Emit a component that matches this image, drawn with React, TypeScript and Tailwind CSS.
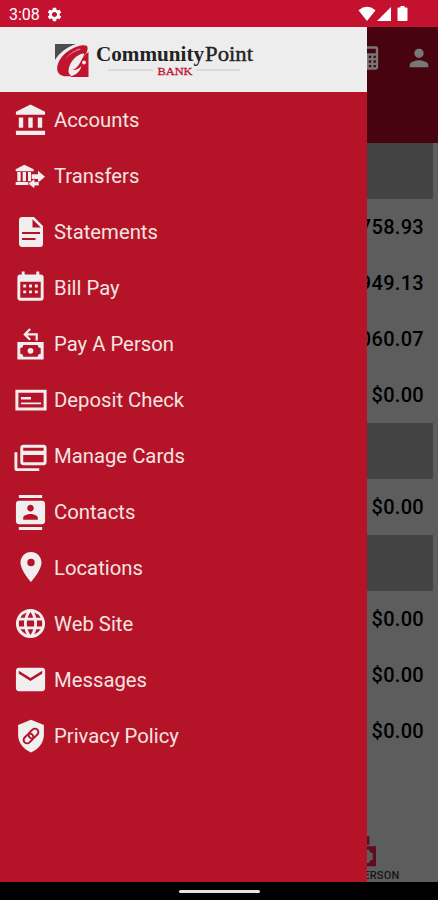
import type { ReactNode } from "react";
import {
  MdAccountBalance,
  MdContacts,
  MdEmail,
  MdLanguage,
  MdLocationOn,
  MdPerson,
  MdSettings,
} from "react-icons/md";

function Icon({ d, className = "size-9" }: { d: string; className?: string }) {
  return (
    <svg viewBox="0 0 24 24" fill="currentColor" className={className}>
      <path fillRule="evenodd" d={d} />
    </svg>
  );
}

const paths = {
  document:
    "M13,9H18.5L13,3.5V9M6,2H14L20,8V20A2,2 0 0,1 18,22H6C4.89,22 4,21.1 4,20V4C4,2.89 4.89,2 6,2M15,17.4V16H6V17.4H15M18,13.4V12H6V13.4H18Z",
  calendar:
    "M9,10V12H7V10H9M13,10V12H11V10H13M17,10V12H15V10H17M19,3A2,2 0 0,1 21,5V19A2,2 0 0,1 19,21H5C3.89,21 3,20.1 3,19V5A2,2 0 0,1 5,3H6V1H8V3H16V1H18V3H19M19,19V8H5V19H19M9,14V16H7V14H9M13,14V16H11V14H13M17,14V16H15V14H17Z",
  cash: "M3,11H21V23H3V11M12,15A2,2 0 0,1 14,17A2,2 0 0,1 12,19A2,2 0 0,1 10,17A2,2 0 0,1 12,15M7,13A2,2 0 0,1 5,15V19A2,2 0 0,1 7,21H17A2,2 0 0,1 19,19V15A2,2 0 0,1 17,13H7M17,5V10H15.5V6.5H9.88L12.3,8.93L11.24,10L7,5.75L11.24,1.5L12.3,2.57L9.88,5H17Z",
  check: "M1.6,5.2H22.4V19H1.6V5.2M3.6,7.2V17H20.4V7.2H3.6M5.3,10H12V11.7H5.3V10M5.3,13.6H18.7V14.8H5.3V13.6Z",
  cards:
    "M21,8V6H7V8H21M21,16V11H7V16H21M21,4A2,2 0 0,1 23,6V16A2,2 0 0,1 21,18H7C5.89,18 5,17.1 5,16V6C5,4.89 5.89,4 7,4H21M3,20H18V22H3A2,2 0 0,1 1,20V9H3V20Z",
  calculator:
    "M7,2H17A2,2 0 0,1 19,4V20A2,2 0 0,1 17,22H7A2,2 0 0,1 5,20V4A2,2 0 0,1 7,2M7,4V8H17V4H7M7,10V12H9V10H7M11,10V12H13V10H11M15,10V12H17V10H15M7,14V16H9V14H7M11,14V16H13V14H11M15,14V16H17V14H15M7,18V20H9V18H7M11,18V20H13V18H11M15,18V20H17V18H15Z",
};

function TransferIcon() {
  return (
    <svg viewBox="0 0 90 72" fill="currentColor" className="mr-0.5 h-6 w-[30px]">
      <path d="M28 2 56 16v6H2v-6zM7 24h10v28H7zM23 24h10v28H23zM39 24h9v28h-9zM2 54h38v9H2z" />
      <path d="M69 20 90 38 69 56V45H50V31h19z" />
      <path d="M59 44v9h13v12H59v9L39 59z" stroke="#b41328" strokeWidth="1.5" />
    </svg>
  );
}

function ShieldIcon() {
  return (
    <svg viewBox="0 0 24 24" className="size-9">
      <path fill="currentColor" d="M12 1.2 20.6 4.6V11c0 5.5-3.5 9.8-8.6 12-5.1-2.2-8.6-6.5-8.6-12V4.6z" />
      <g fill="none" stroke="#b41328" strokeWidth="1.3" transform="rotate(-45 12 12)">
        <rect x="6" y="9.7" width="7.3" height="4.6" rx="2.3" />
        <rect x="10.7" y="9.7" width="7.3" height="4.6" rx="2.3" />
      </g>
    </svg>
  );
}

const menu: { label: string; icon: ReactNode }[] = [
  { label: "Accounts", icon: <MdAccountBalance className="size-[35px]" /> },
  { label: "Transfers", icon: <TransferIcon /> },
  { label: "Statements", icon: <Icon d={paths.document} /> },
  { label: "Bill Pay", icon: <Icon d={paths.calendar} className="mb-0.5 size-[35px]" /> },
  { label: "Pay A Person", icon: <Icon d={paths.cash} className="mb-0.5 size-[35px]" /> },
  { label: "Deposit Check", icon: <Icon d={paths.check} /> },
  { label: "Manage Cards", icon: <Icon d={paths.cards} className="size-[35px]" /> },
  { label: "Contacts", icon: <MdContacts className="size-[35px]" /> },
  { label: "Locations", icon: <MdLocationOn className="mb-0.5 size-9" /> },
  { label: "Web Site", icon: <MdLanguage className="mb-0.5 size-[35px]" /> },
  { label: "Messages", icon: <MdEmail className="mb-0.5 size-[35px]" /> },
  { label: "Privacy Policy", icon: <ShieldIcon /> },
];

// null marks a section heading
const rows = [null, "758.93", "949.13", "060.07", "$0.00", null, "$0.00", null, "$0.00", "$0.00", "$0.00"];

function StatusBar() {
  return (
    <div className="flex h-[27px] shrink-0 items-center bg-[#c4112f] pr-[29px] pl-[9px] text-white">
      <span className="pt-0.5 text-base">3:08</span>
      <MdSettings className="mt-px ml-1.5 size-[17px]" />
      <svg viewBox="0 0 52 18" fill="currentColor" className="mt-px ml-auto h-[18px] w-[52px]">
        <path d="M1.5 5.2Q10 -1.5 18.5 5.2L10 16z" />
        <path d="M34 2v14H20z" />
        <path d="M43.5 1h4v1.5h2q1 0 1 1V15q0 1-1 1h-8q-1 0-1-1V3.5q0-1 1-1h2z" />
      </svg>
    </div>
  );
}

function Logo() {
  return (
    <svg viewBox="0 0 200 40" className="h-10 w-[200px]">
      <path d="M0 4h21C12 7 4 13 0 20z" fill="#4c4d50" />
      <path
        d="M32 6C28 4 19 7 12 12 5 17 1 25 2.5 31c1.5 5 8 6.5 14 4.5-3-1-3.500-4-2.500-8 2-7 8-13 14-14 2 0 1 2-.5 3.5C31 15 34 9 32 6z"
        fill="#c0142f"
      />
      <path d="M24 8.5C18 11 13 15 10.5 19 15 14 20 11 26 9.5z" fill="#ededed" opacity=".5" />
      <path d="M33.5 12v25H14c7-2 11-5 12.5-11-3 3-6 4.5-9 4 5-2 7-6 9-10 2-4 4-6 7-8z" fill="#c0142f" />
      <circle cx="29" cy="22.5" r="1.9" fill="#ededed" />
      <g fontFamily="'Liberation Serif', serif" fill="#222">
        <text x="41" y="20.5" fontSize="20.5" fontWeight="700" textLength="108" lengthAdjust="spacingAndGlyphs">
          Community
        </text>
        <text x="150" y="20.5" fontSize="20.5" stroke="#222" strokeWidth=".4" textLength="48" lengthAdjust="spacingAndGlyphs">
          Point
        </text>
        <text x="102.5" y="35" fontSize="11" fill="#c0142f" stroke="#c0142f" strokeWidth=".3" textLength="35" lengthAdjust="spacingAndGlyphs">
          BANK
        </text>
      </g>
      <path d="M53 30h45M141 30h44" stroke="#d9bfc3" />
    </svg>
  );
}

function Drawer() {
  return (
    <aside className="absolute top-0 bottom-0 left-0 flex w-[366.5px] flex-col bg-[#b41328]">
      <div className="h-[65px] shrink-0 bg-[#ededed] pt-[13px] pl-[55px]">
        <Logo />
      </div>
      <nav className="text-[#f3e4e0]">
        {menu.map((item) => (
          <div key={item.label} className="flex h-14 items-center">
            <span className="flex w-[54px] justify-center pl-[7px] text-[#f0eeee]">
              <span className="flex w-9 justify-center">{item.icon}</span>
            </span>
            <span className="pt-px text-[20.3px]">{item.label}</span>
          </div>
        ))}
      </nav>
    </aside>
  );
}

export default function App() {
  return (
    <div className="flex h-[900px] w-[438px] flex-col overflow-hidden bg-black font-[Roboto,sans-serif]">
      <StatusBar />
      <div className="relative flex h-[855px] flex-col overflow-hidden bg-[#5d5d5d]">
        <header className="flex h-[116px] shrink-0 items-start justify-end gap-[21px] bg-[#470410] pt-[17px] pr-[5px] text-[#777]">
          <Icon d={paths.calculator} className="size-7" />
          <MdPerson className="size-7" />
        </header>
        <main className="mr-[5px] text-black">
          {rows.map((amount, i) =>
            amount === null ? (
              <div key={i} className="h-14 bg-[#434343]" />
            ) : (
              <div key={i} className="flex h-14 items-center justify-end pr-[9px] text-xl font-medium tracking-[0.3px]">
                {amount}
              </div>
            ),
          )}
        </main>
        <footer className="mt-auto flex flex-col items-end pr-[38.5px] text-[#610c1b]">
          <Icon d={paths.cash} className="mr-[18.5px] mb-0.5 size-10" />
          <span className="text-[11px] leading-[12px] font-medium tracking-[0.2px] text-[#161616]">PAY A PERSON</span>
        </footer>
        <Drawer />
      </div>
      <div className="flex flex-1 items-center justify-center pt-px">
        <div className="h-[3.5px] w-[81px] rounded-full bg-[#e4e4e4]" />
      </div>
    </div>
  );
}
